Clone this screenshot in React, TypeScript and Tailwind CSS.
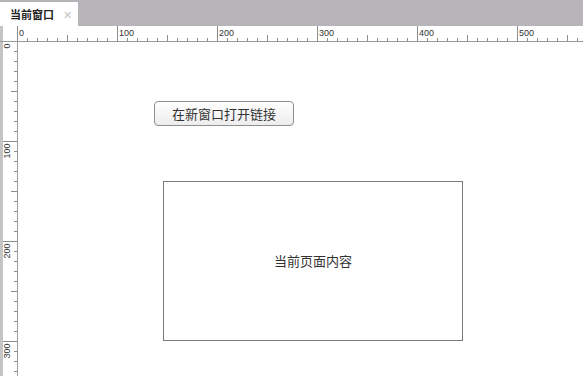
const font = { fontFamily: '"Noto Sans CJK SC", "Liberation Sans", sans-serif' };

function TopRuler() {
  const ticks = [];
  for (let k = 0; k * 10 + 17 < 583; k++) {
    const x = 17.5 + k * 10;
    const h = k % 10 === 0 ? 15 : k % 5 === 0 ? 6 : 3;
    ticks.push(<line key={k} x1={x} x2={x} y1={15 - h} y2={15} stroke="#8c8c8c" strokeWidth={1} />);
    if (k % 10 === 0) {
      ticks.push(
        <text key={'t' + k} x={x + 1.5} y={10} fontSize={9} fill="#333" fontFamily="Liberation Sans, sans-serif">
          {k * 10}
        </text>
      );
    }
  }
  return (
    <svg width={583} height={16} className="block">
      <rect x={0} y={0} width={583} height={16} fill="#fff" />
      <rect x={0} y={0} width={3} height={16} fill="#c4c4c4" />
      {ticks}
      <line x1={0} x2={583} y1={15.5} y2={15.5} stroke="#9a9a9a" strokeWidth={1} />
    </svg>
  );
}

function LeftRuler() {
  const ticks = [];
  for (let k = 0; k * 10 - 1 < 334; k++) {
    const y = -0.5 + k * 10;
    const h = k % 10 === 0 ? 14 : k % 5 === 0 ? 6 : 3;
    ticks.push(<line key={k} x1={17 - h} x2={17} y1={y} y2={y} stroke="#8c8c8c" strokeWidth={1} />);
    if (k % 10 === 0) {
      ticks.push(
        <text
          key={'t' + k}
          transform={`translate(10, ${y + 2}) rotate(-90)`}
          textAnchor="end"
          fontSize={9}
          fill="#333"
          fontFamily="Liberation Sans, sans-serif"
        >
          {k * 10}
        </text>
      );
    }
  }
  return (
    <svg width={18} height={334} className="block shrink-0">
      <rect x={0} y={0} width={18} height={334} fill="#fff" />
      <rect x={0} y={0} width={3} height={334} fill="#c4c4c4" />
      {ticks}
      <line x1={17.5} x2={17.5} y1={0} y2={334} stroke="#9a9a9a" strokeWidth={1} />
    </svg>
  );
}

export default function App() {
  return (
    <div className="w-[583px] h-[376px] overflow-hidden bg-white flex flex-col" style={font}>
      {/* tab bar */}
      <div className="h-[26px] bg-[#b8b5ba] flex items-end shrink-0">
        <div className="h-[24px] w-[78px] bg-white flex items-center pl-[10px] gap-[9px]">
          <span className="text-[11px] font-bold text-[#222] leading-none">当前窗口</span>
          <span className="text-[11px] text-[#c4c4c4] leading-none">✕</span>
        </div>
      </div>

      <TopRuler />

      <div className="flex flex-1 min-h-0">
        <LeftRuler />

        {/* canvas */}
        <div className="flex-1 flex flex-col items-start">
          <button className="mt-[59px] ml-[136px] w-[140px] h-[25px] rounded-[4px] border border-[#8f8f8f] bg-gradient-to-b from-white to-[#ededed] text-[13px] text-[#333] flex items-center justify-center leading-none">
            在新窗口打开链接
          </button>
          <div className="mt-[55px] ml-[145px] w-[300px] h-[160px] border border-[#7a7a7a] flex items-center justify-center">
            <span className="text-[13px] text-[#333]">当前页面内容</span>
          </div>
        </div>
      </div>
    </div>
  );
}
